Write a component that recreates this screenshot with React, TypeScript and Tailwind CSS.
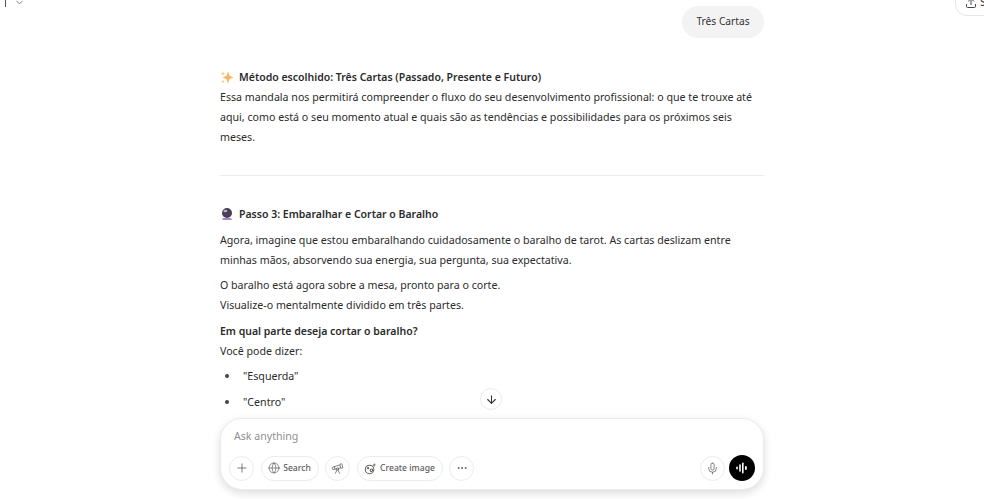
import { ArrowDown, ChevronDown, Ellipsis, Globe, Mic, Plus, Telescope, Upload } from 'lucide-react';

function Sparkles() {
  return (
    <svg width="14" height="14" viewBox="0 0 14 14" className="shrink-0">
      <path d="M8 1.5 L9.6 5.8 L13.5 7.4 L9.6 9 L8 13.5 L6.4 9 L2.5 7.4 L6.4 5.8 Z" fill="#f8b765" />
      <path d="M3 1 L3.7 3 L5.5 3.7 L3.7 4.4 L3 6 L2.3 4.4 L.5 3.7 L2.3 3 Z" fill="#fbd08f" />
      <path d="M3 9.5 L3.5 11 L5 11.5 L3.5 12 L3 13.5 L2.5 12 L1 11.5 L2.5 11 Z" fill="#f9c77e" />
    </svg>
  );
}

function CrystalBall() {
  return (
    <svg width="14" height="14" viewBox="0 0 14 14" className="shrink-0">
      <path d="M3 11 H11 L12 13 H2 Z" fill="#a78bc9" />
      <circle cx="7" cy="6" r="5" fill="#4a3f55" />
      <ellipse cx="5.4" cy="4" rx="2" ry="1.3" fill="#b9afc4" />
    </svg>
  );
}

function ImageSpark() {
  return (
    <svg width="13" height="13" viewBox="0 0 14 14" fill="none" stroke="#5d5d5d" strokeWidth="1.1" className="shrink-0">
      <circle cx="6" cy="8" r="4.6" />
      <circle cx="8" cy="9" r="1.4" />
      <circle cx="4.4" cy="6.6" r=".6" fill="#5d5d5d" />
      <path d="M11 1 L11.6 2.6 L13 3.2 L11.6 3.8 L11 5.4 L10.4 3.8 L9 3.2 L10.4 2.6 Z" fill="#5d5d5d" stroke="none" />
    </svg>
  );
}

function Wave() {
  return (
    <svg width="14" height="14" viewBox="0 0 14 14" fill="white">
      <rect x="1.2" y="5.5" width="1.6" height="3" rx=".8" />
      <rect x="4.2" y="3.2" width="1.6" height="7.6" rx=".8" />
      <rect x="7" y="1.5" width="1.6" height="11" rx=".8" />
      <rect x="10" y="5" width="1.8" height="4" rx=".9" />
    </svg>
  );
}

function ToolCircle({ children }: { children: React.ReactNode }) {
  return (
    <button className="flex h-[25px] w-[25px] items-center justify-center rounded-full border border-[#ececec] text-[#5d5d5d]">
      {children}
    </button>
  );
}

function ToolPill({ icon, label, width }: { icon: React.ReactNode; label: string; width: string }) {
  return (
    <button className={`flex h-[25px] ${width} items-center justify-center gap-[3px] rounded-full border border-[#ececec] text-[8.6px] font-medium text-[#5d5d5d]`}>
      {icon}
      {label}
    </button>
  );
}

export default function App() {
  return (
    <div className="relative flex h-[499px] w-[984px] flex-col overflow-hidden bg-white font-['Noto_Sans',sans-serif] text-[10.65px] text-[#2b2b2b]">
      {/* Cut off header bits */}
      <div className="absolute left-0 top-[-4px] flex items-center gap-2 text-[#777]">
        <span className="ml-[5px] h-[10px] w-px bg-[#555]" />
        <ChevronDown size={11} className="mt-[1px]" />
      </div>
      <div className="absolute left-[955px] top-[-14px] flex h-[30px] w-[60px] items-center gap-[3px] rounded-xl border border-[#e6e6e6] pl-[9px] text-[11px] font-medium text-[#444]">
        <Upload size={12} className="mt-[3px] shrink-0" />
        <span className="mt-[3px]">Share</span>
      </div>

      <main className="mx-auto flex w-[544px] flex-1 flex-col overflow-hidden pt-[6px]">
        <div className="flex justify-end">
          <div className="flex h-[32px] w-[82px] items-center justify-center rounded-full bg-[#f3f3f3] text-[10.2px] text-[#333]">Três Cartas</div>
        </div>

        <div className="mt-[29px] leading-[20px]">
          <p className="flex items-center gap-[5px] text-[10.5px] font-semibold">
            <Sparkles />
            Método escolhido: Três Cartas (Passado, Presente e Futuro)
          </p>
          <p>
            Essa mandala nos permitirá compreender o fluxo do seu desenvolvimento profissional: o que te trouxe até
            <br />
            aqui, como está o seu momento atual e quais são as tendências e possibilidades para os próximos seis
            <br />
            meses.
          </p>
        </div>

        <hr className="mt-[28px] border-[#ececec]" />

        <div className="mt-[28px] leading-[20px]">
          <p className="flex items-center gap-[5px] text-[10.5px] font-semibold">
            <CrystalBall />
            Passo 3: Embaralhar e Cortar o Baralho
          </p>
          <p className="mt-[6px]">
            Agora, imagine que estou embaralhando cuidadosamente o baralho de tarot. As cartas deslizam entre
            <br />
            minhas mãos, absorvendo sua energia, sua pergunta, sua expectativa.
          </p>
          <p className="mt-[5px]">
            O baralho está agora sobre a mesa, pronto para o corte.
            <br />
            Visualize-o mentalmente dividido em três partes.
          </p>
          <p className="mt-[6px] text-[10.5px] font-semibold">Em qual parte deseja cortar o baralho?</p>
          <p>Você pode dizer:</p>
          <ul className="mt-[5px] flex flex-col gap-[6px] pl-[23px]">
            <li className="relative before:absolute before:left-[-18px] before:top-[8px] before:h-[4px] before:w-[4px] before:rounded-full before:bg-[#444]">"Esquerda"</li>
            <li className="relative before:absolute before:left-[-18px] before:top-[8px] before:h-[4px] before:w-[4px] before:rounded-full before:bg-[#444]">"Centro"</li>
          </ul>
        </div>
      </main>

      <div className="absolute left-[480px] top-[388px] flex h-[22px] w-[22px] items-center justify-center rounded-full border border-[#ececec] bg-white text-[#333]">
        <ArrowDown size={13} />
      </div>

      {/* Composer */}
      <div className="absolute left-[220px] top-[418px] flex h-[72px] w-[544px] flex-col rounded-[22px] border border-[#ececec] bg-white pl-[8px] pr-[8px] shadow-[0_3px_8px_rgba(0,0,0,0.14)]">
        <div className="pl-[5px] pt-[8px] text-[10.6px] leading-[18px] text-[#8f8f8f]">Ask anything</div>
        <div className="mt-[10px] flex items-center gap-[6.5px]">
          <ToolCircle><Plus size={14} strokeWidth={1.4} /></ToolCircle>
          <ToolPill icon={<Globe size={12} strokeWidth={1.4} />} label="Search" width="w-[58px]" />
          <ToolCircle><Telescope size={13} strokeWidth={1.4} /></ToolCircle>
          <ToolPill icon={<ImageSpark />} label="Create image" width="w-[86px]" />
          <ToolCircle><Ellipsis size={12} /></ToolCircle>
          <div className="ml-auto flex items-center gap-[4px]">
            <ToolCircle><Mic size={13} strokeWidth={1.4} /></ToolCircle>
            <button className="flex h-[26px] w-[26px] items-center justify-center rounded-full bg-black"><Wave /></button>
          </div>
        </div>
      </div>
    </div>
  );
}
